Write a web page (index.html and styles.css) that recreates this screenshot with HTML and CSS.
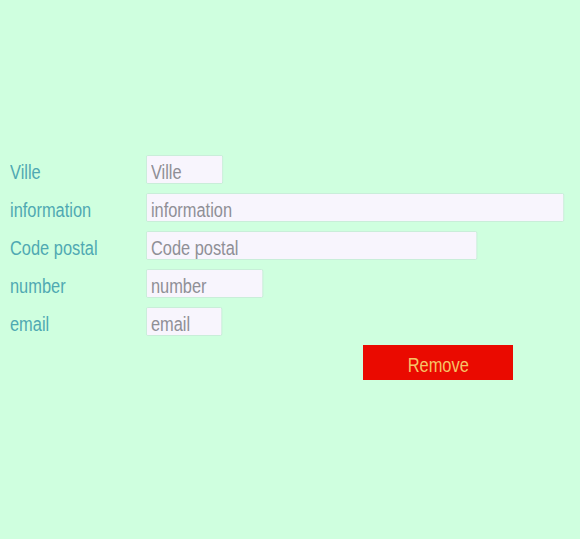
FILE: index.html
```html
<!DOCTYPE html>
<html>
<head>
<meta charset="utf-8">
<link rel="stylesheet" href="styles.css">
</head>
<body>
<form class="form">
  <div class="row"><label class="label"><span class="narrow">Ville</span></label><input class="field w-ville" placeholder="Ville"></div>
  <div class="row"><label class="label"><span class="narrow">information</span></label><input class="field w-info" placeholder="information"></div>
  <div class="row"><label class="label"><span class="narrow">Code postal</span></label><input class="field w-code" placeholder="Code postal"></div>
  <div class="row"><label class="label"><span class="narrow">number</span></label><input class="field w-number" placeholder="number"></div>
  <div class="row"><label class="label"><span class="narrow">email</span></label><input class="field w-email" placeholder="email"></div>
  <div class="actions"><button type="button" class="remove"><span class="narrow">Remove</span></button></div>
</form>
</body>
</html>
```
FILE: styles.css
```css
html, body {
  margin: 0;
  padding: 0;
  background: #cfffdf;
  height: 100%;
}
body {
  font-family: "Liberation Sans", Arial, sans-serif;
  font-size: 20px;
}
.narrow {
  display: inline-block;
  transform: scaleX(0.82);
  transform-origin: left center;
}
.form {
  padding: 155px 0 0 10px;
  display: flex;
  flex-direction: column;
  gap: 9px;
}
.row {
  display: flex;
  align-items: center;
  height: 29px;
}
.label {
  flex: none;
  width: 136px;
  color: #4fa9b2;
  font-size: 20px;
  padding-top: 5px;
}
.field {
  flex: none;
  box-sizing: border-box;
  height: 29px;
  margin: 0;
  padding: 5px 5px 0;
  border: 1px solid #c6ecd6;
  border-radius: 2px;
  background: #f8f5fd;
  font-family: inherit;
  font-size: 20px;
  color: #888;
  outline: none;
  transform: scaleX(0.82);
  transform-origin: left center;
}
.field::placeholder { color: #8f8f96; opacity: 1; }
.w-ville { width: 94px; }
.w-info { width: 510px; }
.w-code { width: 404px; }
.w-number { width: 143px; }
.w-email { width: 93px; }
.actions {
  padding-left: 353px;
}
.remove {
  width: 150px;
  height: 35px;
  border: none;
  background: #ea0a00;
  color: #f6c466;
  font-family: inherit;
  font-size: 20px;
  padding: 5px 0 0;
  display: flex;
  justify-content: center;
  align-items: center;
}
.remove .narrow {
  transform-origin: center center;
}
```
